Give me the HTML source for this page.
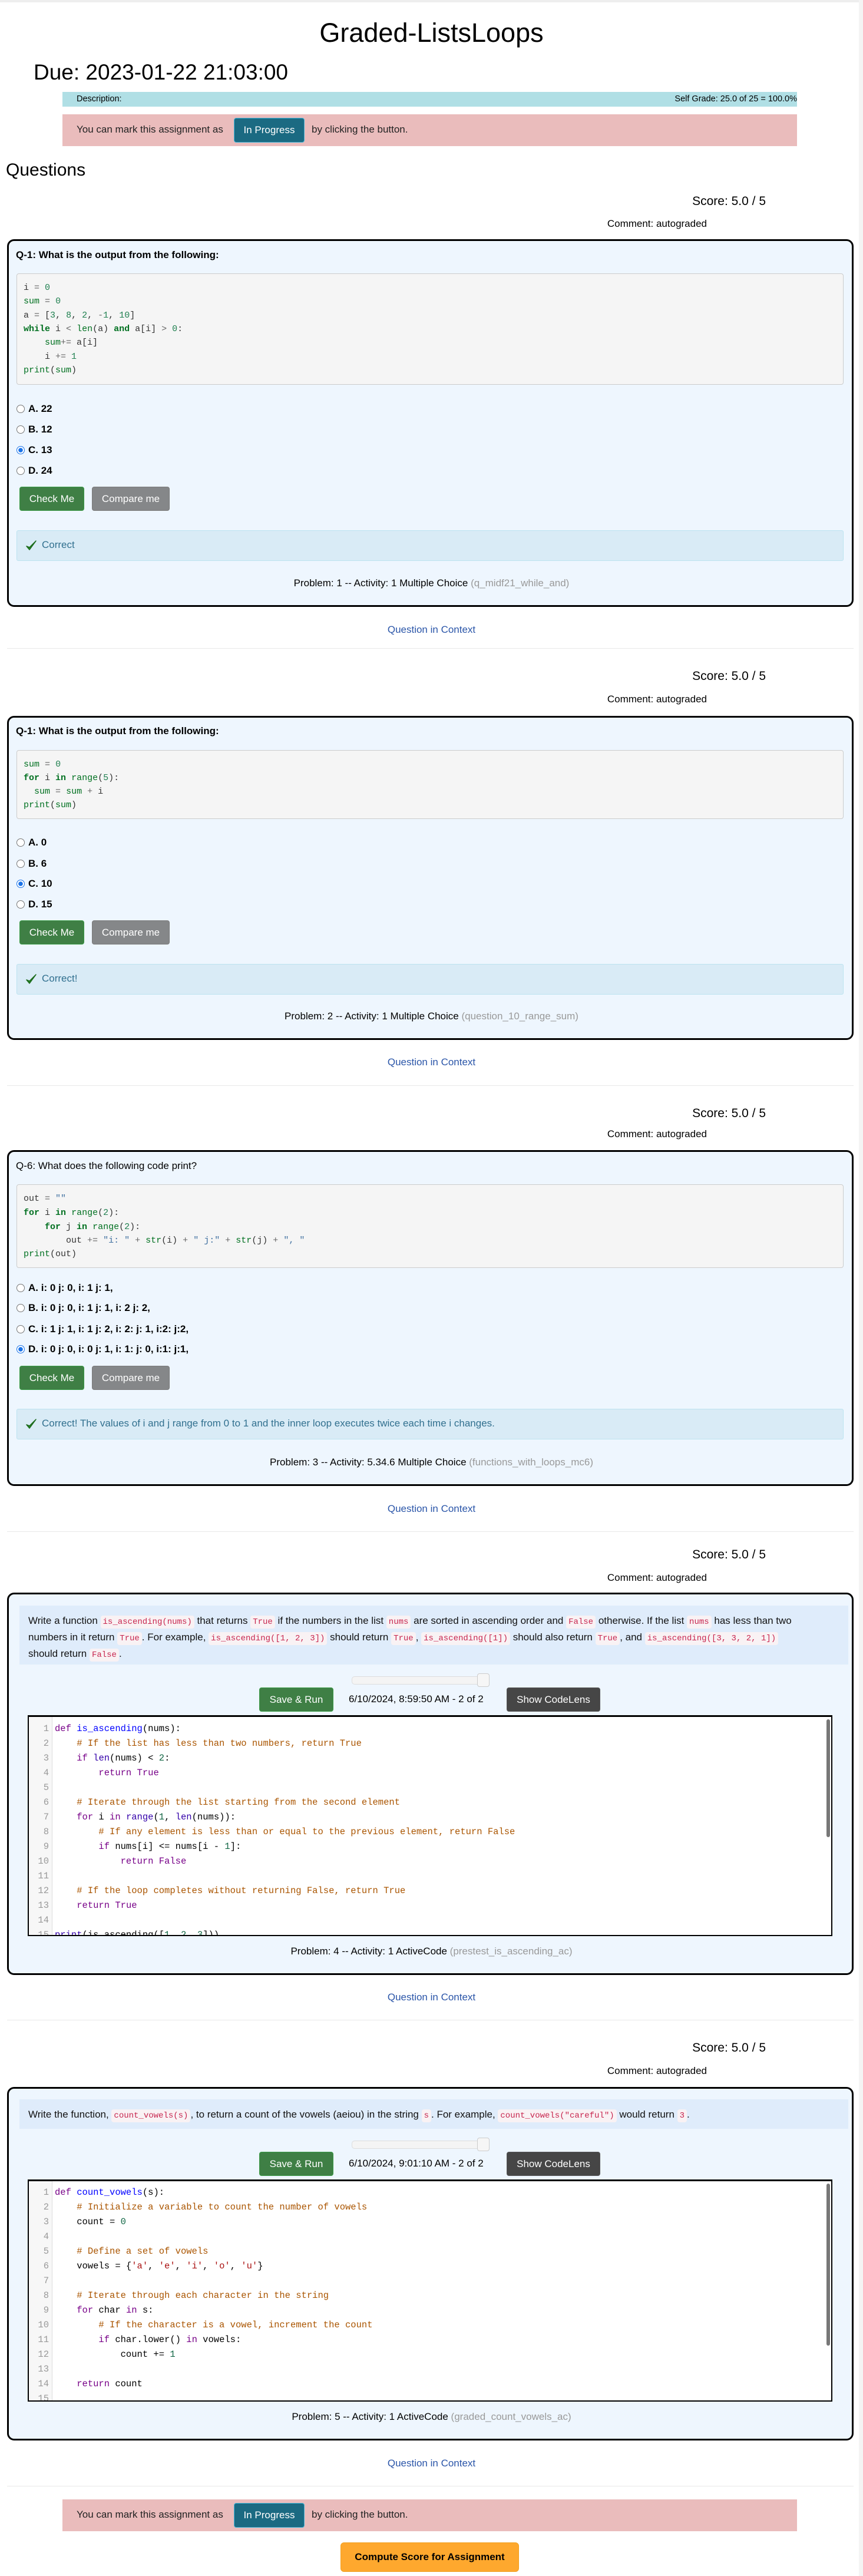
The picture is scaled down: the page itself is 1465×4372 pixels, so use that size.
<!DOCTYPE html>
<html><head><meta charset="utf-8">
<style>
*{box-sizing:border-box;margin:0;padding:0}
html,body{width:1465px;height:4372px;background:#fff;overflow:hidden}
body{position:relative;font-family:"Liberation Sans",Arial,sans-serif;color:#000;font-size:17px}
.a{position:absolute;white-space:nowrap}
.mono{font-family:"Liberation Mono",monospace}
.box{position:absolute;left:12px;width:1437px;border:3px solid #000;border-radius:12px;background:#eef6fe}
.code{position:absolute;left:28px;width:1404px;background:#f5f5f5;border:1px solid #ccc;border-radius:4px}
.cl{position:absolute;left:40px;font-family:"Liberation Mono",monospace;font-size:15px;line-height:20px;color:#333;white-space:pre}
.k{color:#007020;font-weight:bold}.n{color:#208050}.g{color:#007020}.o{color:#666}.s{color:#4070a0}
.opt{position:absolute;left:28px;font-weight:bold;font-size:17px;line-height:20px;white-space:nowrap}
.opt i{display:inline-block;width:14px;height:14px;border:1px solid #777;border-radius:50%;background:#fff;vertical-align:-2px;margin-right:6px}
.opt i.on{border:1px solid #1a73e8;background:radial-gradient(circle,#1a73e8 0 3.5px,#fff 4px)}
.btn{position:absolute;height:41px;border-radius:4px;color:#fff;font-size:17px;line-height:39px;text-align:center;white-space:nowrap}
.chk{left:33px;width:110px;background:#3f7f45;border:1px solid #3a9a45}
.cmp{left:156px;width:132px;background:#858789;border:1px solid #7a7a7a}
.fb{position:absolute;left:28px;width:1404px;height:52px;background:#d9ebf6;border:1px solid #bce3f0;border-radius:3px}
.fb span{position:absolute;left:42px;top:14px;color:#31708f;font-size:17px;white-space:nowrap}
.fb svg{position:absolute;left:14px;top:15px}
.prob{position:absolute;left:0;width:1465px;text-align:center;font-size:17px;line-height:22px;white-space:nowrap}
.prob em{font-style:normal;color:#999}
.qic{position:absolute;left:0;width:1465px;text-align:center;color:#2a55a8;font-size:17px;line-height:22px}
.hr{position:absolute;left:12px;width:1437px;height:1px;background:#e8e8e8}
.score{position:absolute;right:165px;font-size:21px;line-height:26px}
.com{position:absolute;right:265px;font-size:17px;line-height:22px}
.qh{position:absolute;left:27px;font-size:17px;line-height:22px;font-weight:bold;white-space:nowrap}
.desc{position:absolute;left:33px;width:1407px;background:#dfecfb;padding:13px 15px;font-size:17px;line-height:25px;color:#111;white-space:nowrap}
.desc code{font-family:"Liberation Mono",monospace;font-size:14px;color:#c7254e;background:#f9f2f4;border-radius:4px;padding:3px 4px}
.slider{position:absolute;left:597px;width:234px;height:14px;background:#f4f4f4;border:1px solid #ddd;border-radius:5px}
.slider b{position:absolute;right:-1px;top:-6px;width:21px;height:23px;background:#f6f6f6;border:1px solid #ccc;border-radius:4px}
.sr{left:440px;width:126px;background:#3f7f45;border:1px solid #3a9a45}
.scl{left:860px;width:159px;background:#464646;border:1px solid #555}
.date{position:absolute;left:592px;font-size:17px;line-height:22px;white-space:nowrap}
.ed{position:absolute;left:47px;width:1366px;background:#fff;border:2px solid #000;border-top-width:3px;overflow:hidden}
.gut{position:absolute;left:0;top:0;bottom:0;width:40px;background:#f7f7f7;border-right:1px solid #ddd}
.el{position:absolute;left:0;font-family:"Liberation Mono",monospace;font-size:15.5px;line-height:25px;white-space:pre;color:#000}
.el .ln{display:inline-block;width:34px;text-align:right;color:#999;margin-right:10px}
.kw{color:#708}.df{color:#00f}.cm{color:#a50}.nu{color:#164}.bi{color:#30a}.st{color:#a11}
.sb{position:absolute;right:2px;width:6px;background:#777;border-radius:3px}
.pink{position:absolute;left:106px;width:1247px;height:54px;background:#eabcbc;font-size:17px;color:#222}
.pink span{position:absolute;top:16px;white-space:nowrap}
.ip{position:absolute;left:291px;top:6px;width:120px;height:42px;background:#1b6a82;border:1px solid #46b8da;border-radius:4px;color:#fff;text-align:center;line-height:40px;font-size:17px}
</style></head><body>
<div class="a" style="left:0;top:0;width:1465px;height:4px;background:#eee"></div>
<div class="a" style="left:1458px;top:0;width:7px;height:4372px;background:#f4f4f4"></div>

<div class="a" style="left:0;width:1465px;top:28px;text-align:center;font-size:45px;line-height:56px">Graded-ListsLoops</div>
<div class="a" style="left:57px;top:100px;font-size:37px;line-height:46px">Due: 2023-01-22 21:03:00</div>
<div class="a" style="left:106px;top:156px;width:1247px;height:25px;background:#b0dfe5;font-size:14.5px;line-height:25px"><span style="position:absolute;left:24px">Description:</span><span style="position:absolute;right:0">Self Grade: 25.0 of 25 = 100.0%</span></div>
<div class="pink" style="top:194px"><span style="left:24px">You can mark this assignment as</span><div class="ip">In Progress</div><span style="left:423px">by clicking the button.</span></div>
<div class="a" style="left:10px;top:271px;font-size:30px;line-height:36px">Questions</div>

<!-- Section 1 -->
<div class="score" style="top:329px">Score: 5.0 / 5</div>
<div class="com" style="top:369px">Comment: autograded</div>
<div class="box" style="top:406px;height:624px"></div>
<div class="qh" style="top:422px">Q-1: What is the output from the following:</div>
<div class="code" style="top:464px;height:189px"></div>
<div class="cl" style="top:479px">i <span class="o">=</span> <span class="n">0</span></div>
<div class="cl" style="top:502px"><span class="g">sum</span> <span class="o">=</span> <span class="n">0</span></div>
<div class="cl" style="top:526px">a <span class="o">=</span> [<span class="n">3</span>, <span class="n">8</span>, <span class="n">2</span>, <span class="o">-</span><span class="n">1</span>, <span class="n">10</span>]</div>
<div class="cl" style="top:549px"><span class="k">while</span> i <span class="o">&lt;</span> <span class="g">len</span>(a) <span class="k">and</span> a[i] <span class="o">&gt;</span> <span class="n">0</span>:</div>
<div class="cl" style="top:572px">    <span class="g">sum</span><span class="o">+=</span> a[i]</div>
<div class="cl" style="top:596px">    i <span class="o">+=</span> <span class="n">1</span></div>
<div class="cl" style="top:619px"><span class="g">print</span>(<span class="g">sum</span>)</div>
<div class="opt" style="top:684px"><i></i>A. 22</div>
<div class="opt" style="top:719px"><i></i>B. 12</div>
<div class="opt" style="top:754px"><i class="on"></i>C. 13</div>
<div class="opt" style="top:789px"><i></i>D. 24</div>
<div class="btn chk" style="top:826px">Check Me</div>
<div class="btn cmp" style="top:826px">Compare me</div>
<div class="fb" style="top:900px"><svg width="20" height="20" viewBox="0 0 20 20"><path d="M2 11 L7 17 L18 2 L7 13 Z" fill="#2a8a2a" stroke="#1c6b1c" stroke-width="1.5" stroke-linejoin="round"/></svg><span>Correct</span></div>
<div class="prob" style="top:979px">Problem: 1 -- Activity: 1 Multiple Choice <em>(q_midf21_while_and)</em></div>
<div class="qic" style="top:1058px">Question in Context</div>
<div class="hr" style="top:1100px"></div>

<!-- Section 2 -->
<div class="score" style="top:1135px">Score: 5.0 / 5</div>
<div class="com" style="top:1176px">Comment: autograded</div>
<div class="box" style="top:1215px;height:550px"></div>
<div class="qh" style="top:1230px">Q-1: What is the output from the following:</div>
<div class="code" style="top:1273px;height:117px"></div>
<div class="cl" style="top:1288px"><span class="g">sum</span> <span class="o">=</span> <span class="n">0</span></div>
<div class="cl" style="top:1311px"><span class="k">for</span> i <span class="k">in</span> <span class="g">range</span>(<span class="n">5</span>):</div>
<div class="cl" style="top:1334px">  <span class="g">sum</span> <span class="o">=</span> <span class="g">sum</span> <span class="o">+</span> i</div>
<div class="cl" style="top:1357px"><span class="g">print</span>(<span class="g">sum</span>)</div>
<div class="opt" style="top:1420px"><i></i>A. 0</div>
<div class="opt" style="top:1456px"><i></i>B. 6</div>
<div class="opt" style="top:1490px"><i class="on"></i>C. 10</div>
<div class="opt" style="top:1525px"><i></i>D. 15</div>
<div class="btn chk" style="top:1562px">Check Me</div>
<div class="btn cmp" style="top:1562px">Compare me</div>
<div class="fb" style="top:1636px"><svg width="20" height="20" viewBox="0 0 20 20"><path d="M2 11 L7 17 L18 2 L7 13 Z" fill="#2a8a2a" stroke="#1c6b1c" stroke-width="1.5" stroke-linejoin="round"/></svg><span>Correct!</span></div>
<div class="prob" style="top:1714px">Problem: 2 -- Activity: 1 Multiple Choice <em>(question_10_range_sum)</em></div>
<div class="qic" style="top:1792px">Question in Context</div>
<div class="hr" style="top:1842px"></div>

<!-- Section 3 -->
<div class="score" style="top:1877px">Score: 5.0 / 5</div>
<div class="com" style="top:1914px">Comment: autograded</div>
<div class="box" style="top:1952px;height:570px"></div>
<div class="qh" style="top:1968px;font-weight:normal">Q-6: What does the following code print?</div>
<div class="code" style="top:2010px;height:142px"></div>
<div class="cl" style="top:2025px">out <span class="o">=</span> <span class="s">""</span></div>
<div class="cl" style="top:2049px"><span class="k">for</span> i <span class="k">in</span> <span class="g">range</span>(<span class="n">2</span>):</div>
<div class="cl" style="top:2073px">    <span class="k">for</span> j <span class="k">in</span> <span class="g">range</span>(<span class="n">2</span>):</div>
<div class="cl" style="top:2096px">        out <span class="o">+=</span> <span class="s">"i: "</span> <span class="o">+</span> <span class="g">str</span>(i) <span class="o">+</span> <span class="s">" j:"</span> <span class="o">+</span> <span class="g">str</span>(j) <span class="o">+</span> <span class="s">", "</span></div>
<div class="cl" style="top:2119px"><span class="g">print</span>(out)</div>
<div class="opt" style="top:2176px"><i></i>A. i: 0 j: 0, i: 1 j: 1,</div>
<div class="opt" style="top:2210px"><i></i>B. i: 0 j: 0, i: 1 j: 1, i: 2 j: 2,</div>
<div class="opt" style="top:2246px"><i></i>C. i: 1 j: 1, i: 1 j: 2, i: 2: j: 1, i:2: j:2,</div>
<div class="opt" style="top:2280px"><i class="on"></i>D. i: 0 j: 0, i: 0 j: 1, i: 1: j: 0, i:1: j:1,</div>
<div class="btn chk" style="top:2318px">Check Me</div>
<div class="btn cmp" style="top:2318px">Compare me</div>
<div class="fb" style="top:2391px"><svg width="20" height="20" viewBox="0 0 20 20"><path d="M2 11 L7 17 L18 2 L7 13 Z" fill="#2a8a2a" stroke="#1c6b1c" stroke-width="1.5" stroke-linejoin="round"/></svg><span>Correct! The values of i and j range from 0 to 1 and the inner loop executes twice each time i changes.</span></div>
<div class="prob" style="top:2471px">Problem: 3 -- Activity: 5.34.6 Multiple Choice <em>(functions_with_loops_mc6)</em></div>
<div class="qic" style="top:2550px">Question in Context</div>
<div class="hr" style="top:2599px"></div>

<!-- Section 4 -->
<div class="score" style="top:2626px">Score: 5.0 / 5</div>
<div class="com" style="top:2667px">Comment: autograded</div>
<div class="box" style="top:2703px;height:649px"></div>
<div class="desc" style="top:2725px;height:100px">Write a function <code>is_ascending(nums)</code> that returns <code>True</code> if the numbers in the list <code>nums</code> are sorted in ascending order and <code>False</code> otherwise. If the list <code>nums</code> has less than two<br>numbers in it return <code>True</code>. For example, <code>is_ascending([1, 2, 3])</code> should return <code>True</code>, <code>is_ascending([1])</code> should also return <code>True</code>, and <code>is_ascending([3, 3, 2, 1])</code><br>should return <code>False</code>.</div>
<div class="slider" style="top:2845px"><b></b></div>
<div class="btn sr" style="top:2864px">Save &amp; Run</div>
<div class="date" style="top:2873px">6/10/2024, 8:59:50 AM - 2 of 2</div>
<div class="btn scl" style="top:2864px">Show CodeLens</div>
<div class="ed" style="top:2911px;height:375px">
<div class="gut"></div>
<div class="sb" style="top:4px;height:200px"></div>
<div class="el" style="top:8px"><span class="ln">1</span><span class="kw">def</span> <span class="df">is_ascending</span>(nums):</div>
<div class="el" style="top:33px"><span class="ln">2</span>    <span class="cm"># If the list has less than two numbers, return True</span></div>
<div class="el" style="top:58px"><span class="ln">3</span>    <span class="kw">if</span> <span class="bi">len</span>(nums) &lt; <span class="nu">2</span>:</div>
<div class="el" style="top:83px"><span class="ln">4</span>        <span class="kw">return</span> <span class="kw">True</span></div>
<div class="el" style="top:108px"><span class="ln">5</span></div>
<div class="el" style="top:133px"><span class="ln">6</span>    <span class="cm"># Iterate through the list starting from the second element</span></div>
<div class="el" style="top:158px"><span class="ln">7</span>    <span class="kw">for</span> i <span class="kw">in</span> <span class="bi">range</span>(<span class="nu">1</span>, <span class="bi">len</span>(nums)):</div>
<div class="el" style="top:183px"><span class="ln">8</span>        <span class="cm"># If any element is less than or equal to the previous element, return False</span></div>
<div class="el" style="top:208px"><span class="ln">9</span>        <span class="kw">if</span> nums[i] &lt;= nums[i - <span class="nu">1</span>]:</div>
<div class="el" style="top:233px"><span class="ln">10</span>            <span class="kw">return</span> <span class="kw">False</span></div>
<div class="el" style="top:258px"><span class="ln">11</span></div>
<div class="el" style="top:283px"><span class="ln">12</span>    <span class="cm"># If the loop completes without returning False, return True</span></div>
<div class="el" style="top:308px"><span class="ln">13</span>    <span class="kw">return</span> <span class="kw">True</span></div>
<div class="el" style="top:333px"><span class="ln">14</span></div>
<div class="el" style="top:358px"><span class="ln">15</span><span class="bi">print</span>(is_ascending([<span class="nu">1</span>, <span class="nu">2</span>, <span class="nu">3</span>]))</div>
</div>
<div class="prob" style="top:3301px">Problem: 4 -- Activity: 1 ActiveCode <em>(prestest_is_ascending_ac)</em></div>
<div class="qic" style="top:3379px">Question in Context</div>
<div class="hr" style="top:3428px"></div>

<!-- Section 5 -->
<div class="score" style="top:3463px">Score: 5.0 / 5</div>
<div class="com" style="top:3504px">Comment: autograded</div>
<div class="box" style="top:3542px;height:600px"></div>
<div class="desc" style="top:3563px;height:50px">Write the function, <code>count_vowels(s)</code>, to return a count of the vowels (aeiou) in the string <code>s</code>. For example, <code>count_vowels("careful")</code> would return <code>3</code>.</div>
<div class="slider" style="top:3633px"><b></b></div>
<div class="btn sr" style="top:3652px">Save &amp; Run</div>
<div class="date" style="top:3661px">6/10/2024, 9:01:10 AM - 2 of 2</div>
<div class="btn scl" style="top:3652px">Show CodeLens</div>
<div class="ed" style="top:3699px;height:377px">
<div class="gut"></div>
<div class="sb" style="top:4px;height:275px"></div>
<div class="el" style="top:7px"><span class="ln">1</span><span class="kw">def</span> <span class="df">count_vowels</span>(s):</div>
<div class="el" style="top:32px"><span class="ln">2</span>    <span class="cm"># Initialize a variable to count the number of vowels</span></div>
<div class="el" style="top:57px"><span class="ln">3</span>    count = <span class="nu">0</span></div>
<div class="el" style="top:82px"><span class="ln">4</span></div>
<div class="el" style="top:107px"><span class="ln">5</span>    <span class="cm"># Define a set of vowels</span></div>
<div class="el" style="top:132px"><span class="ln">6</span>    vowels = {<span class="st">'a'</span>, <span class="st">'e'</span>, <span class="st">'i'</span>, <span class="st">'o'</span>, <span class="st">'u'</span>}</div>
<div class="el" style="top:157px"><span class="ln">7</span></div>
<div class="el" style="top:182px"><span class="ln">8</span>    <span class="cm"># Iterate through each character in the string</span></div>
<div class="el" style="top:207px"><span class="ln">9</span>    <span class="kw">for</span> char <span class="kw">in</span> s:</div>
<div class="el" style="top:232px"><span class="ln">10</span>        <span class="cm"># If the character is a vowel, increment the count</span></div>
<div class="el" style="top:257px"><span class="ln">11</span>        <span class="kw">if</span> char.lower() <span class="kw">in</span> vowels:</div>
<div class="el" style="top:282px"><span class="ln">12</span>            count += <span class="nu">1</span></div>
<div class="el" style="top:307px"><span class="ln">13</span></div>
<div class="el" style="top:332px"><span class="ln">14</span>    <span class="kw">return</span> count</div>
<div class="el" style="top:357px"><span class="ln">15</span></div>
</div>
<div class="prob" style="top:4091px">Problem: 5 -- Activity: 1 ActiveCode <em>(graded_count_vowels_ac)</em></div>
<div class="qic" style="top:4170px">Question in Context</div>
<div class="hr" style="top:4219px"></div>

<div class="pink" style="top:4242px"><span style="left:24px">You can mark this assignment as</span><div class="ip">In Progress</div><span style="left:423px">by clicking the button.</span></div>
<div class="a" style="left:578px;top:4315px;width:303px;height:50px;background:#fea82e;border:1px solid #f0a020;border-radius:6px;text-align:center;line-height:48px;font-weight:bold;font-size:17px">Compute Score for Assignment</div>
</body></html>
